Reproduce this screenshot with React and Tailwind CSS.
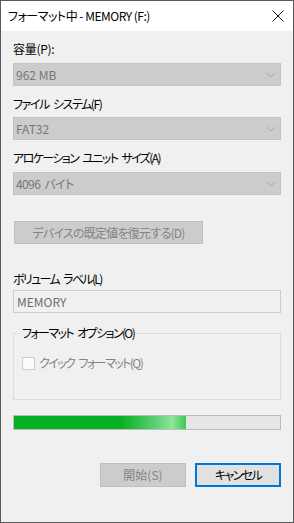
import React from "react";

const font = "[font-family:'Noto_Sans_CJK_JP','Noto_Sans',sans-serif] [font-feature-settings:'palt']";

function Chevron() {
  return (
    <svg width="10" height="6" viewBox="0 0 10 6" className="shrink-0">
      <path d="M1 1 L5 5 L9 1" fill="none" stroke="#a8a8a8" strokeWidth="1" />
    </svg>
  );
}

function Combo({ value, className = "" }) {
  return (
    <div className="h-[23px] w-full border border-[#c4c4c4] bg-[#cccccc] flex items-center justify-between pl-[2px] pr-[4px]">
      <span className={"text-[12px] leading-[16px] text-[#777777] " + className}>{value}</span>
      <Chevron />
    </div>
  );
}

function Label({ children, className = "" }) {
  return <div className={"h-[16px] text-[12px] leading-[16px] text-black " + className}>{children}</div>;
}

export default function App() {
  return (
    <div className={"w-[294px] h-[523px] border border-[#5a5a5a] bg-[#f0f0f0] flex flex-col " + font}>
      <div className="h-[30px] bg-white flex items-center justify-between pl-[7px] pr-[9px] shrink-0">
        <span className="text-[12px] leading-[16px] text-black tracking-[-0.5px]">フォーマット中 - MEMORY (F:)</span>
        <svg width="12" height="12" viewBox="0 0 12 12">
          <path d="M0.5 0.5 L11.5 11.5 M11.5 0.5 L0.5 11.5" stroke="#111" strokeWidth="1" fill="none" />
        </svg>
      </div>
      <div className="flex flex-col px-[12px]">
        <Label className="mt-[10px] tracking-[-0.3px]">容量(P):</Label>
        <div className="mt-[6px]"><Combo value="962 MB" /></div>
        <Label className="mt-[10px] tracking-[-1.45px] [word-spacing:3px]">ファイル システム(F)</Label>
        <div className="mt-[5px]"><Combo value="FAT32" /></div>
        <Label className="mt-[10px] tracking-[-1.6px] [word-spacing:3px]">アロケーション ユニット サイズ(A)</Label>
        <div className="mt-[6px]"><Combo value="4096 バイト" className="tracking-[-0.6px] [word-spacing:2px]" /></div>
        <div className="mt-[26px] ml-[1px] w-[189px] h-[23px] border border-[#bfbfbf] bg-[#cccccc] flex items-center justify-center text-[12px] text-[#838383] tracking-[-0.75px]">
          デバイスの既定値を復元する(D)
        </div>
        <Label className="mt-[27px] tracking-[-1.65px] [word-spacing:3px]">ボリューム ラベル(L)</Label>
        <div className="mt-[3px] h-[23px] w-full border border-[#cccccc] bg-[#f0f0f0] flex items-center pl-[3px] text-[12px] text-[#6d6d6d]">
          MEMORY
        </div>
        <div className="mt-[20px] h-[67px] w-full border border-[#dcdcdc] relative flex flex-col">
          <span className="absolute left-[6px] top-[-9px] bg-[#f0f0f0] px-[2px] text-[12px] leading-[16px] text-black tracking-[-1.6px] [word-spacing:3px]">
            フォーマット オプション(O)
          </span>
          <div className="mt-[21px] ml-[8px] flex items-center gap-[4px]">
            <div className="w-[13px] h-[13px] border border-[#cccccc] bg-[#fbfbfb]" />
            <span className="text-[12px] leading-[16px] text-[#838383] tracking-[-1.55px] [word-spacing:3px]">クイック フォーマット(Q)</span>
          </div>
        </div>
        <div className="mt-[15px] h-[15px] w-full border border-[#bcbcbc] bg-[#e6e6e6] flex">
          <div className="h-full w-[172px] bg-[linear-gradient(to_right,#06b025_0%,#06b025_62%,#5ccf72_82%,#8ee69c_92%,#3cc455_100%)]" />
        </div>
        <div className="mt-[33px] flex justify-end gap-[9px]">
          <div className="w-[86px] h-[24px] border border-[#bfbfbf] bg-[#cccccc] flex items-center justify-center text-[12px] text-[#838383]">
            開始(S)
          </div>
          <div className="w-[86px] h-[24px] border-2 border-[#0078d7] bg-[#e1e1e1] flex items-center justify-center text-[12px] text-black tracking-[-1.6px]">
            キャンセル
          </div>
        </div>
      </div>
    </div>
  );
}
